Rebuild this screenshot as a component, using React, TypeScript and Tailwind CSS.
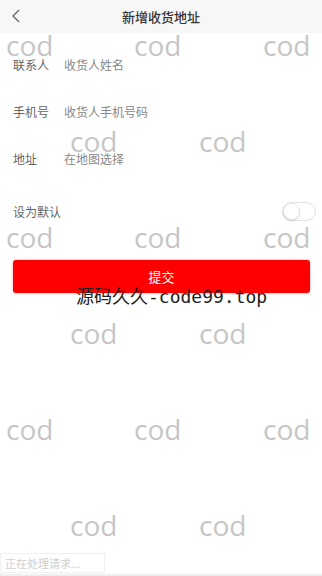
import React from 'react';

const marks = [
  { x: 6, y: 31 }, { x: 134, y: 31 }, { x: 263, y: 31 },
  { x: 70, y: 127 }, { x: 199, y: 127 },
  { x: 6, y: 223 }, { x: 134, y: 223 }, { x: 263, y: 223 },
  { x: 70, y: 319 }, { x: 199, y: 319 },
  { x: 6, y: 415 }, { x: 134, y: 415 }, { x: 263, y: 415 },
  { x: 70, y: 511 }, { x: 199, y: 511 },
];

const rows = [
  { label: '联系人', placeholder: '收货人姓名' },
  { label: '手机号', placeholder: '收货人手机号码' },
  { label: '地址', placeholder: '在地图选择' },
];

export default function App() {
  return (
    <div
      className="relative w-[322px] h-[576px] overflow-hidden bg-white"
      style={{ fontFamily: '"Noto Sans CJK SC", "Noto Sans", sans-serif' }}
    >
      {/* header */}
      <div className="h-[33px] bg-[#f7f7f7] flex items-center relative">
        <svg className="absolute left-[11px] top-[9px]" width="10" height="14" viewBox="0 0 10 14">
          <path d="M8 1 L2 7 L8 13" fill="none" stroke="#666" strokeWidth="1.3" />
        </svg>
        <div className="flex-1 text-center text-[13px] font-medium text-[#333] leading-none">新增收货地址</div>
      </div>

      {/* form */}
      <div className="pt-[8px]">
        {rows.map((r) => (
          <div key={r.label} className="h-[47px] flex items-center px-[13px] text-[12px] leading-none">
            <span className="w-[51px] text-[#666]">{r.label}</span>
            <span className="text-[#888]">{r.placeholder}</span>
          </div>
        ))}
        <div className="mt-[6px] h-[47px] flex items-center justify-between pl-[13px] pr-[6px] text-[12px] leading-none">
          <span className="text-[#666]">设为默认</span>
          <div className="w-[34px] h-[19px] rounded-full border border-[#e2e2e2] bg-white relative">
            <div className="absolute left-0 top-0 w-[17px] h-[17px] rounded-full bg-white border border-[#e6e6e6] shadow-[0_1px_2px_rgba(0,0,0,0.15)]" />
          </div>
        </div>
      </div>

      <div className="px-[13px] pr-[12px] mt-[25px]">
        <button className="w-[297px] h-[33px] rounded-[3px] bg-[#fe0000] text-white text-[13px] shadow-[0_0_3px_rgba(255,0,0,0.35)]">
          提交
        </button>
      </div>

      {/* watermarks */}
      <div
        className="absolute left-[76px] top-[288px] text-[18px] text-[#222] leading-none whitespace-nowrap"
        style={{ fontFamily: '"DejaVu Sans Mono", "Noto Sans CJK SC", monospace' }}
      >
        源码久久-code99.top
      </div>
      {marks.map((m, i) => (
        <span
          key={i}
          className="absolute text-[28px] leading-none text-[#c6c6c6] pointer-events-none"
          style={{ left: m.x, top: m.y, fontFamily: '"Open Sans", sans-serif' }}
        >
          cod
        </span>
      ))}

      {/* toast */}
      <div className="absolute left-0 top-[553px] w-[105px] h-[20px] border border-[#f0f0f0] bg-white flex items-center pl-[4px] text-[11px] text-[#cfcfcf] leading-none">
        正在处理请求...
      </div>
      <div className="absolute left-0 bottom-0 w-full h-[2px] bg-[#eeeeee]" />
    </div>
  );
}
